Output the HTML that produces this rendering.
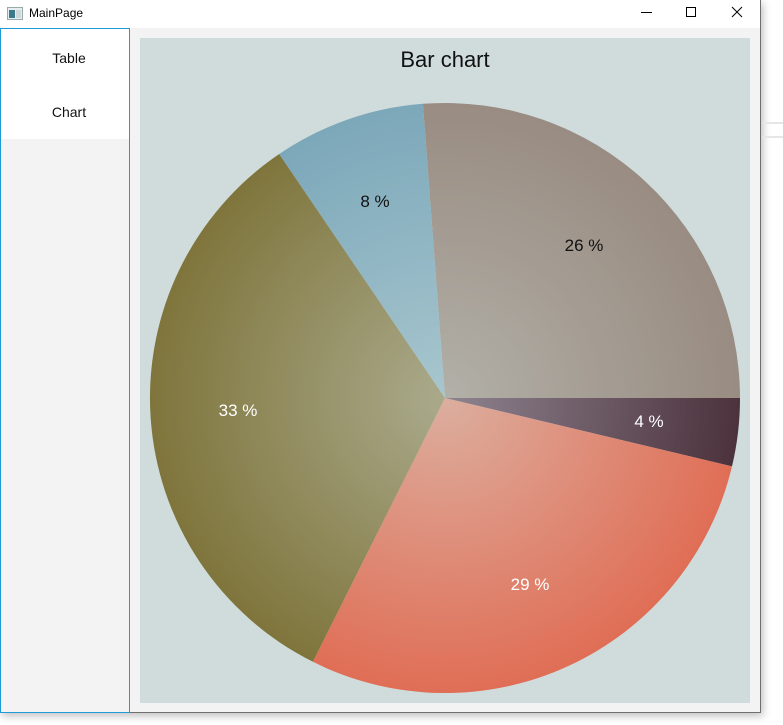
<!DOCTYPE html>
<html><head><meta charset="utf-8"><style>
html,body{margin:0;padding:0;width:783px;height:725px;overflow:hidden;background:#fff;font-family:"Segoe UI","Liberation Sans","DejaVu Sans",sans-serif;}
.win{position:absolute;left:0;top:0;width:760px;height:712px;background:#f3f3f3;border-right:1px solid #6f6f6f;border-bottom:1px solid #6f6f6f;box-shadow:2px 3px 8px rgba(0,0,0,.25);}
.title{position:absolute;left:0;top:0;width:760px;height:28px;background:#fff;}
.title .t{position:absolute;left:29px;top:6px;font-size:12px;color:#000;}
.left{position:absolute;left:0;top:28px;width:128px;height:683px;border:1px solid #1e9bd7;background:#f3f3f3;}
.left .top{position:absolute;left:0;top:0;width:128px;height:110px;background:#fff;}
.left .i{position:absolute;left:4px;width:128px;text-align:center;font-size:14px;color:#111;}
.chart{position:absolute;left:140px;top:38px;width:610px;height:665px;background:#d0dcdc;}
</style></head><body>
<div class="win">
 <div class="title">
  <svg style="position:absolute;left:7px;top:7px" width="16" height="13"><rect x="0.5" y="0.5" width="15" height="12" fill="#e8eef0" stroke="#9aa"/><rect x="2" y="3" width="6" height="8" fill="#3a7a8a"/><rect x="9" y="3" width="5" height="8" fill="#cfd8d8"/></svg>
  <div class="t">MainPage</div>
  <svg style="position:absolute;left:636px;top:6px" width="120" height="14">
   <line x1="5" y1="6.5" x2="16" y2="6.5" stroke="#000"/>
   <rect x="50.5" y="1.5" width="9" height="9" fill="none" stroke="#000"/>
   <path d="M96 1 L106 11 M106 1 L96 11" stroke="#000" fill="none"/>
  </svg>
 </div>
 <div class="left"><div class="top"></div>
  <div class="i" style="top:21px">Table</div>
  <div class="i" style="top:75px">Chart</div>
 </div>
 <div class="chart"></div>
 <svg style="position:absolute;left:0;top:0" width="760" height="712">
  <defs>
   <radialGradient id="g1" gradientUnits="userSpaceOnUse" cx="445" cy="398" r="295"><stop offset="0" stop-color="#b2b0a8"/><stop offset="1" stop-color="#998c82"/></radialGradient>
   <radialGradient id="g2" gradientUnits="userSpaceOnUse" cx="445" cy="398" r="295"><stop offset="0" stop-color="#8e8490"/><stop offset="1" stop-color="#4c323c"/></radialGradient>
   <radialGradient id="g3" gradientUnits="userSpaceOnUse" cx="445" cy="398" r="295"><stop offset="0" stop-color="#dcae9e"/><stop offset="1" stop-color="#e06e56"/></radialGradient>
   <radialGradient id="g4" gradientUnits="userSpaceOnUse" cx="445" cy="398" r="295"><stop offset="0" stop-color="#aaaa8c"/><stop offset="1" stop-color="#7f753c"/></radialGradient>
   <radialGradient id="g5" gradientUnits="userSpaceOnUse" cx="445" cy="398" r="295"><stop offset="0" stop-color="#a8c6ce"/><stop offset="1" stop-color="#7ca8ba"/></radialGradient>
  </defs>
  <path d="M445 398 L422.9 103.8 A295 295 0 0 1 740 398 Z" fill="url(#g1)"/>
  <path d="M445 398 L740 398 A295 295 0 0 1 732 466.4 Z" fill="url(#g2)"/>
  <path d="M445 398 L732 466.4 A295 295 0 0 1 312.9 661.8 Z" fill="url(#g3)"/>
  <path d="M445 398 L312.9 661.8 A295 295 0 0 1 279.2 154 Z" fill="url(#g4)"/>
  <path d="M445 398 L279.2 154 A295 295 0 0 1 422.9 103.8 Z" fill="url(#g5)"/>
  <g font-family="Segoe UI, Liberation Sans, sans-serif" font-size="17" text-anchor="middle">
   <text x="445" y="67" font-size="22" fill="#111">Bar chart</text>
   <text x="375" y="207" fill="#111">8 %</text>
   <text x="584" y="251" fill="#111">26 %</text>
   <text x="649" y="427" fill="#fff">4 %</text>
   <text x="530" y="590" fill="#fff">29 %</text>
   <text x="238" y="416" fill="#fff">33 %</text>
  </g>
 </svg>
</div>
<div style="position:absolute;left:762px;top:122px;width:21px;height:2px;background:#e6e6e6"></div>
<div style="position:absolute;left:762px;top:136px;width:21px;height:2px;background:#e6e6e6"></div>
</body></html>
